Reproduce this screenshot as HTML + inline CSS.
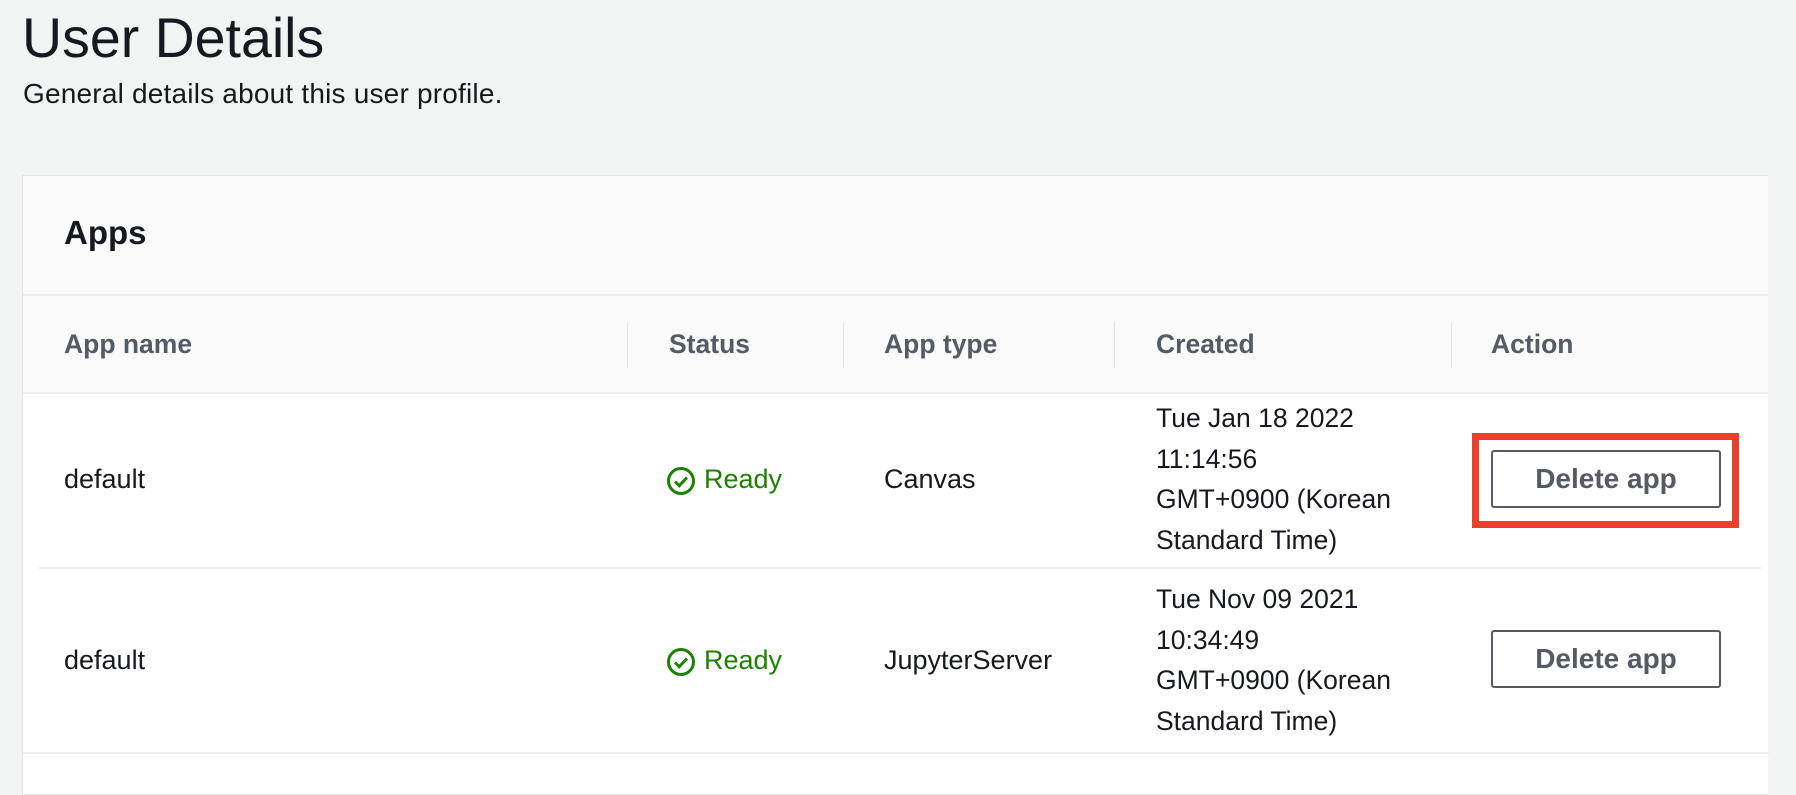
<!DOCTYPE html>
<html><head><meta charset="utf-8"><style>
*{box-sizing:border-box;margin:0;padding:0}
body{width:1796px;height:771px;overflow:hidden;background:#f2f3f3;font-family:"Liberation Sans",sans-serif;color:#16191f;position:relative}
.abs{position:absolute;white-space:nowrap}
.title{left:22px;top:6px;font-size:55.5px;line-height:64px}
.sub{left:23px;top:78px;font-size:28px;line-height:32px;letter-spacing:0.2px}
.card{position:absolute;left:22px;top:175px;width:1746px;height:620px;background:#fff;border:1px solid #e3e5e5;border-right:none}
.hdr{position:absolute;left:0;top:0;width:100%;height:120px;background:#fafafa;border-bottom:2px solid #eaeded}
.th{position:absolute;left:0;top:120px;width:100%;height:98px;background:#fafafa;border-bottom:2px solid #eaeded}
.sep{position:absolute;top:26px;width:1px;height:46px;background:#e3e5e5}
.h{font-weight:bold;color:#545b64;font-size:26.5px;top:33px}
.cell{font-size:27px}
.btn{position:absolute;width:230px;height:58px;border:2px solid #545b64;border-radius:3px;color:#545b64;font-weight:bold;font-size:28px;text-align:center;line-height:54px;background:#fff}
.ready{color:#1d8102;font-size:27px}
.date{font-size:26.5px;line-height:40.5px}
</style></head><body>
<div class="abs title">User Details</div>
<div class="abs sub">General details about this user profile.</div>
<div class="card">
 <div class="hdr"><div class="abs" style="left:41px;top:38px;font-size:33px;font-weight:bold">Apps</div></div>
 <div class="th">
  <div class="abs h" style="left:41px">App name</div>
  <div class="sep" style="left:604px"></div>
  <div class="abs h" style="left:646px">Status</div>
  <div class="sep" style="left:820px"></div>
  <div class="abs h" style="left:861px">App type</div>
  <div class="sep" style="left:1091px"></div>
  <div class="abs h" style="left:1133px">Created</div>
  <div class="sep" style="left:1428px"></div>
  <div class="abs h" style="left:1468px">Action</div>
 </div>
 <div class="abs cell" style="left:41px;top:288px">default</div>
 <svg class="abs" style="left:643px;top:290px" width="30" height="30" viewBox="0 0 30 30"><circle cx="15" cy="15" r="12.5" fill="none" stroke="#1d8102" stroke-width="3"/><path d="M9 15.5l4.2 4.2L21 11.5" fill="none" stroke="#1d8102" stroke-width="3"/></svg>
 <div class="abs ready" style="left:681px;top:288px">Ready</div>
 <div class="abs cell" style="left:861px;top:288px">Canvas</div>
 <div class="abs date" style="left:1133px;top:222px">Tue Jan 18 2022<br>11:14:56<br>GMT+0900 (Korean<br>Standard Time)</div>
 <div class="btn" style="left:1468px;top:274px">Delete app</div>
 <div class="abs" style="left:16px;top:391px;width:1722px;height:2px;background:#eaeded"></div>
 <div class="abs cell" style="left:41px;top:469px">default</div>
 <svg class="abs" style="left:643px;top:471px" width="30" height="30" viewBox="0 0 30 30"><circle cx="15" cy="15" r="12.5" fill="none" stroke="#1d8102" stroke-width="3"/><path d="M9 15.5l4.2 4.2L21 11.5" fill="none" stroke="#1d8102" stroke-width="3"/></svg>
 <div class="abs ready" style="left:681px;top:469px">Ready</div>
 <div class="abs cell" style="left:861px;top:469px">JupyterServer</div>
 <div class="abs date" style="left:1133px;top:403px">Tue Nov 09 2021<br>10:34:49<br>GMT+0900 (Korean<br>Standard Time)</div>
 <div class="btn" style="left:1468px;top:454px">Delete app</div>
 <div class="abs" style="left:0;top:576px;width:1746px;height:2px;background:#eaeded"></div>
</div>
<div class="abs" style="left:1472px;top:433px;width:267px;height:95px;border:7px solid #e8402a"></div>
</body></html>
